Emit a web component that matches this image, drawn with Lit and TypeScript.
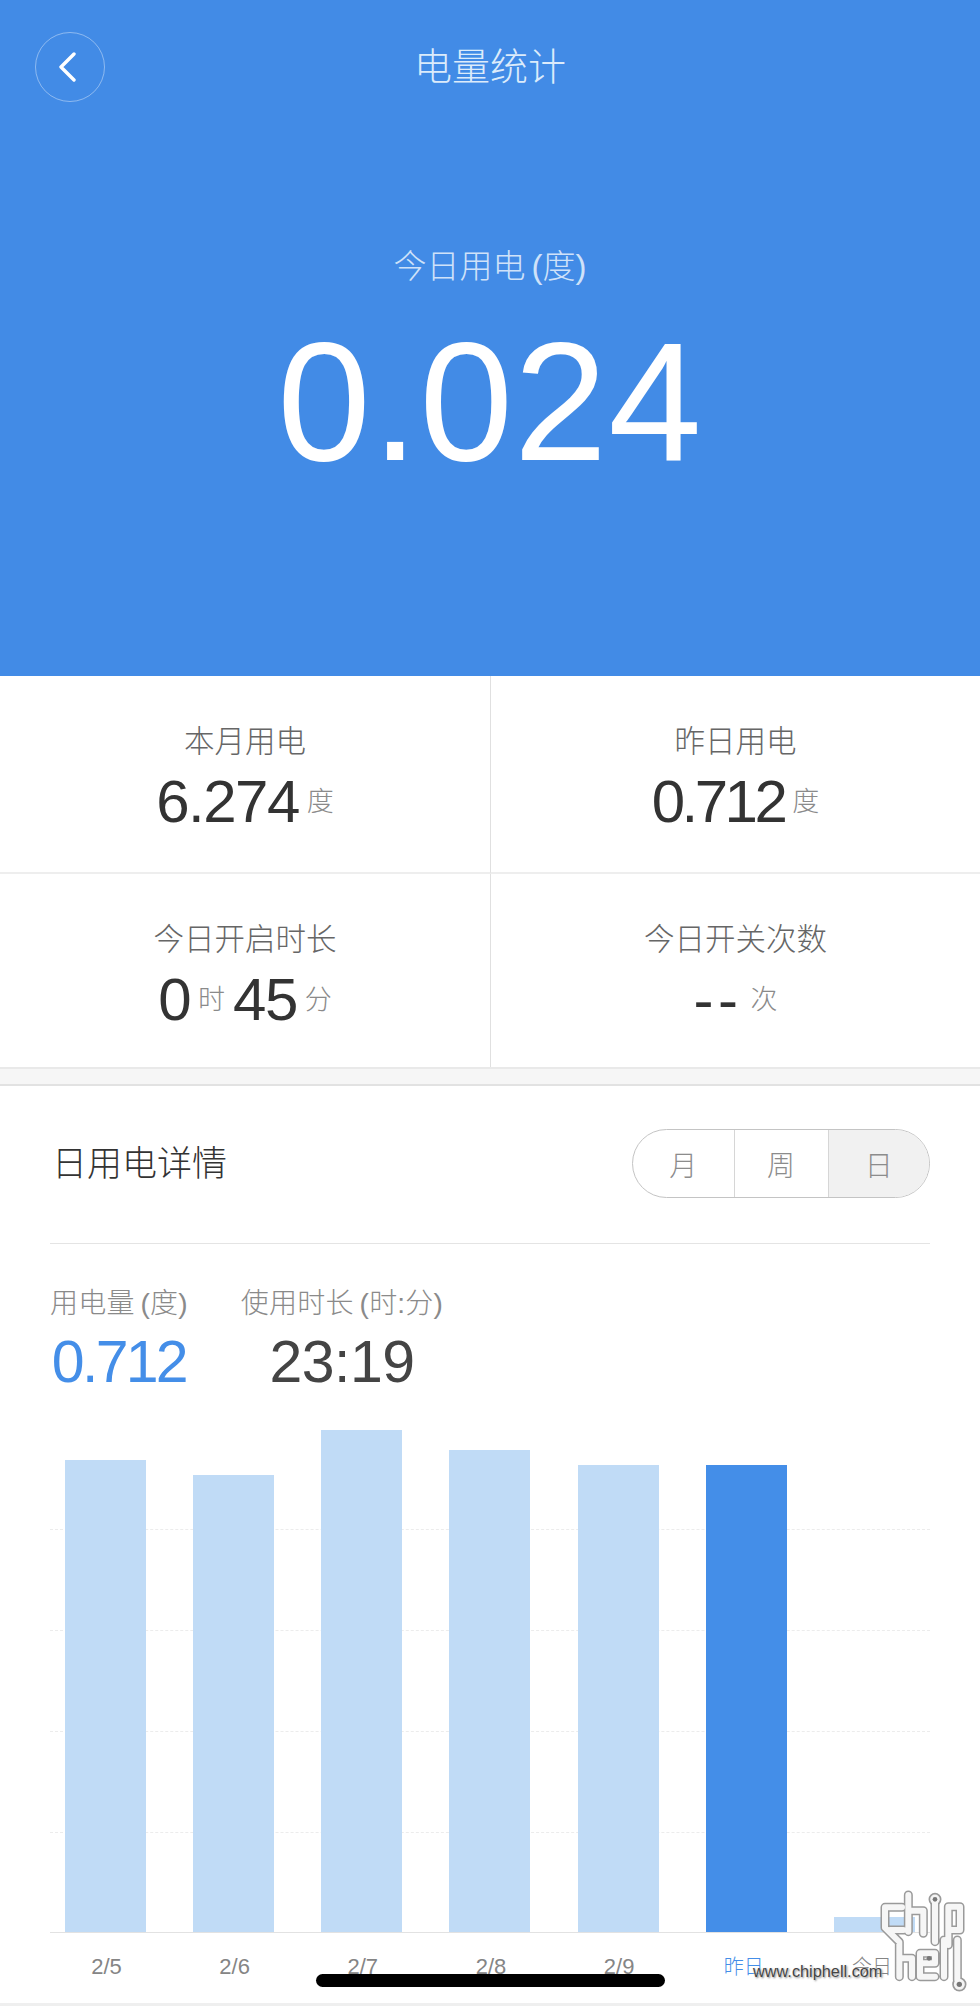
import { LitElement, css, html } from "lit";
import { customElement } from "lit/decorators.js";

const bars = [
  { label: "2/5", height: 472 },
  { label: "2/6", height: 457 },
  { label: "2/7", height: 502 },
  { label: "2/8", height: 482 },
  { label: "2/9", height: 467 },
  { label: "昨日", height: 467, active: true },
  { label: "今日", height: 15 },
];

const logoPath =
  "M186 82H135V143L178 186V290M150 150H190M205 45V155M205 92H250V160M285 60V185M325 80H360V150H335M325 80V195M178 235H216V290M240 290V220H285V250H250M240 290H285M312 180V290M352 180V300";

@customElement("app-root")
class AppRoot extends LitElement {
  static styles = css`
  :host {
    display: block;
    position: relative;
    width: 980px;
    height: 2006px;
    overflow: hidden;
    background: #f6f6f6;
    font-family: "Liberation Sans", "Noto Sans CJK SC", sans-serif;
    font-weight: 300;
    color: #333;
  }
  .hero {
    height: 676px;
    background: #428be6;
    color: #fff;
    text-align: center;
  }
  .nav {
    display: grid;
    grid-template-columns: 70px 1fr 70px;
    align-items: center;
    padding: 32px 35px 0;
  }
  .back {
    width: 70px;
    height: 70px;
    box-sizing: border-box;
    padding-right: 6px;
    border: 1.5px solid rgba(255, 255, 255, 0.4);
    border-radius: 50%;
    display: flex;
    align-items: center;
    justify-content: center;
  }
  .nav-title {
    font-size: 38px;
    line-height: 70px;
    color: #dcebfb;
  }
  .today-label {
    margin-top: 143px;
    font-size: 33px;
    line-height: 44px;
    word-spacing: -3px;
    color: #cfe2f9;
  }
  .today-value {
    margin-top: 23px;
    font-size: 168px;
    line-height: 180px;
    letter-spacing: 1px;
  }
  .stats {
    display: grid;
    grid-template-columns: 491px 1fr;
    grid-template-rows: 198px 193px;
    background: #fff;
    border-bottom: 2px solid #e9e9e9;
  }
  .cell {
    box-sizing: border-box;
    padding-top: 45px;
    text-align: center;
    border-bottom: 2px solid #eee;
  }
  .cell:nth-child(odd) {
    border-right: 1px solid #e0e0e0;
  }
  .cell:nth-child(n + 3) {
    border-bottom: 0;
  }
  .cell-label {
    font-size: 30.5px;
    line-height: 40px;
    color: #666;
  }
  .cell-value {
    display: flex;
    justify-content: center;
    align-items: center;
    gap: 8px;
    margin-top: 10px;
    height: 60px;
    font-size: 60px;
    letter-spacing: -1.5px;
    color: #333;
  }
  .cell-value.narrow {
    letter-spacing: -3.5px;
  }
  .cell-value.dashes {
    letter-spacing: 4.5px;
  }
  .unit {
    margin-bottom: 4px;
    font-size: 27px;
    letter-spacing: 0;
    color: #8a8a8a;
  }
  .detail {
    margin-top: 15px;
    height: 922px;
    box-sizing: border-box;
    padding: 0 50px;
    background: #fff;
    border-top: 2px solid #e2e2e2;
    border-bottom: 3px solid #efefef;
  }
  .detail-head {
    display: flex;
    justify-content: space-between;
    align-items: center;
    height: 69px;
    padding: 43px 0 45px;
    border-bottom: 1px solid #e4e4e4;
  }
  .detail-title {
    margin-bottom: 6px;
    padding-left: 2px;
    font-size: 35px;
    color: #333;
  }
  .segment {
    display: flex;
    width: 298px;
    height: 69px;
    box-sizing: border-box;
    border: 1.5px solid #c4c4c4;
    border-radius: 35px;
    overflow: hidden;
    font-size: 28px;
    color: #8c8c8c;
  }
  .segment div {
    flex: 1;
    display: flex;
    align-items: center;
    justify-content: center;
    box-sizing: border-box;
  }
  .segment .mid {
    flex: 0 0 95px;
    border-left: 1.5px solid #d6d6d6;
    border-right: 1.5px solid #d6d6d6;
  }
  .segment .on {
    background: #f1f1f1;
  }
  .summary {
    display: flex;
    gap: 53px;
    padding-top: 40px;
    text-align: center;
  }
  .summary-label {
    font-size: 28px;
    line-height: 40px;
    word-spacing: -2px;
    letter-spacing: 0.2px;
    color: #8a8a8a;
  }
  .summary-value {
    margin-top: 8px;
    font-size: 59px;
    line-height: 60px;
    letter-spacing: -0.5px;
    color: #444;
  }
  .summary-value.blue {
    letter-spacing: -2.7px;
    color: #448ee8;
  }
  .chart {
    position: relative;
    display: flex;
    justify-content: space-between;
    align-items: flex-end;
    height: 504px;
    margin-top: 36px;
    padding: 0 15px;
    border-bottom: 1px solid #e2e2e2;
  }
  .grid {
    position: absolute;
    inset: 0;
    display: flex;
    flex-direction: column;
    justify-content: flex-end;
  }
  .grid div {
    height: 100px;
    border-top: 1px dashed #ececec;
  }
  .bar {
    position: relative;
    width: 81px;
    background: #c0dbf6;
  }
  .bar.active {
    background: #448ee8;
  }
  .axis {
    display: flex;
    justify-content: space-between;
    margin-top: 19px;
    padding: 0 15px;
    font-size: 22px;
    line-height: 30px;
    text-align: center;
    color: #858585;
  }
  .axis div {
    width: 81px;
    padding-left: 2px;
    box-sizing: border-box;
  }
  .axis .cjk {
    font-size: 20px;
    padding: 0 5px 0 0;
  }
  .axis .active {
    color: #448ee8;
  }
  .home {
    position: absolute;
    left: 316px;
    top: 1974px;
    width: 349px;
    height: 13px;
    border-radius: 7px;
    background: #000;
  }
  .watermark {
    position: absolute;
    left: 753px;
    top: 1961px;
    font-size: 16.3px;
    line-height: 20px;
    font-weight: 400;
    white-space: nowrap;
    color: #444;
    text-shadow: 0 0 2px #fff, 1px 1px 2px #777;
  }
  .logo {
    position: absolute;
    left: 840px;
    top: 1880px;
  }
  `;

  render() {
    return html`
      <div class="hero">
        <div class="nav">
          <div class="back">
            <svg width="20" height="30" viewBox="0 0 20 30">
              <path d="M17 2 4 15l13 13" fill="none" stroke="#fff" stroke-width="3.4" stroke-linecap="round" stroke-linejoin="round" />
            </svg>
          </div>
          <div class="nav-title">电量统计</div>
        </div>
        <div class="today-label">今日用电 (度)</div>
        <div class="today-value">0.024</div>
      </div>
      <div class="stats">
        <div class="cell">
          <div class="cell-label">本月用电</div>
          <div class="cell-value">6.274<span class="unit">度</span></div>
        </div>
        <div class="cell">
          <div class="cell-label">昨日用电</div>
          <div class="cell-value narrow">0.712<span class="unit">度</span></div>
        </div>
        <div class="cell">
          <div class="cell-label">今日开启时长</div>
          <div class="cell-value">0<span class="unit">时</span>45<span class="unit">分</span></div>
        </div>
        <div class="cell">
          <div class="cell-label">今日开关次数</div>
          <div class="cell-value dashes">--<span class="unit">次</span></div>
        </div>
      </div>
      <div class="detail">
        <div class="detail-head">
          <div class="detail-title">日用电详情</div>
          <div class="segment">
            <div>月</div>
            <div class="mid">周</div>
            <div class="on">日</div>
          </div>
        </div>
        <div class="summary">
          <div>
            <div class="summary-label">用电量 (度)</div>
            <div class="summary-value blue">0.712</div>
          </div>
          <div>
            <div class="summary-label">使用时长 (时:分)</div>
            <div class="summary-value">23:19</div>
          </div>
        </div>
        <div class="chart">
          <div class="grid">
            <div></div>
            <div></div>
            <div></div>
            <div style="height: 99px"></div>
          </div>
          ${bars.map((b) => html`<div class="bar ${b.active ? "active" : ""}" style="height: ${b.height}px"></div>`)}
        </div>
        <div class="axis">
          ${bars.map((b, i) => html`<div class="${i > 4 ? "cjk" : ""} ${b.active ? "active" : ""}">${b.label}</div>`)}
        </div>
      </div>
      <div class="home"></div>
      <div class="watermark">www.chiphell.com</div>
      <svg class="logo" width="140" height="126" viewBox="0 0 420 378" fill="none" stroke-linecap="round" stroke-linejoin="round" aria-hidden="true">
        <path d=${logoPath} stroke="#9a9a9a" stroke-width="27" />
        <circle cx="285" cy="58" r="17" fill="#f4f4f4" stroke="#9a9a9a" stroke-width="5" />
        <circle cx="358" cy="313" r="19" fill="#f4f4f4" stroke="#9a9a9a" stroke-width="5" />
        <path d=${logoPath} stroke="#f6f6f6" stroke-width="18" />
        <circle cx="285" cy="58" r="7" fill="#777" />
        <circle cx="358" cy="313" r="8" fill="#777" />
        <circle cx="267" cy="235" r="7" fill="#777" />
      </svg>
    `;
  }
}

declare global {
  interface HTMLElementTagNameMap {
    "app-root": AppRoot;
  }
}
